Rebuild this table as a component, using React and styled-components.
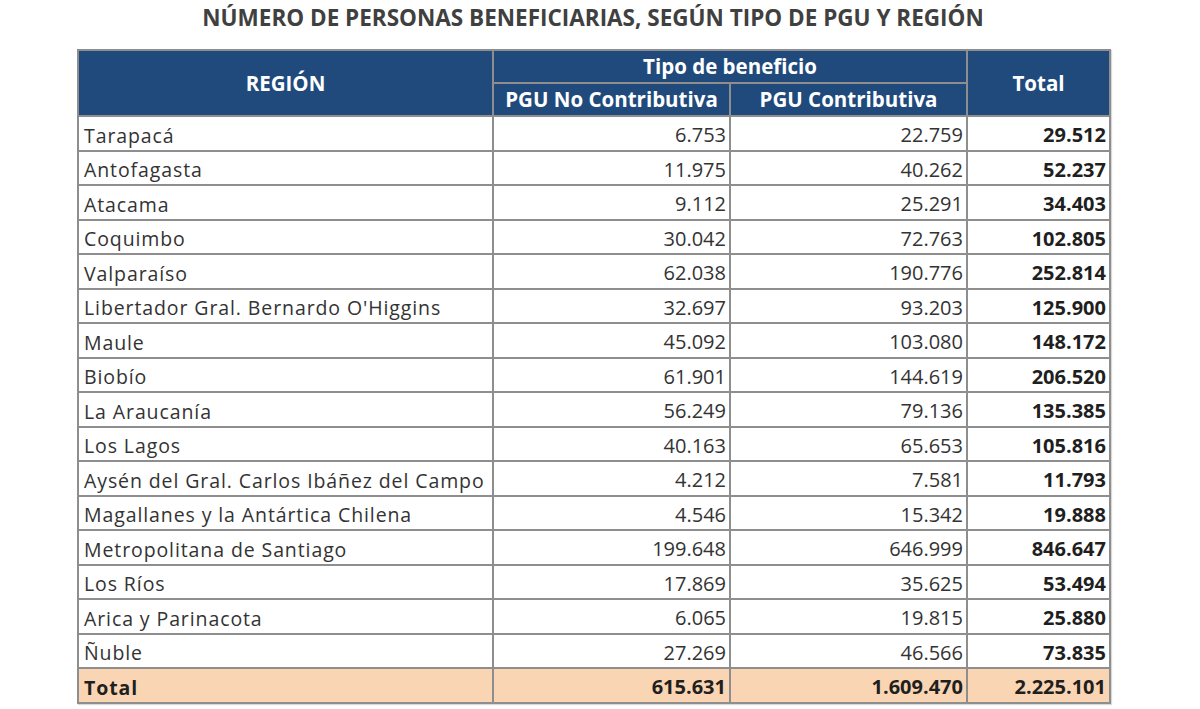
import styled, { createGlobalStyle } from "styled-components";

const GlobalStyle = createGlobalStyle`
  html, body {
    margin: 0;
    padding: 0;
    background: #ffffff;
  }
`;

const rows = [
  ["Tarapacá", "6.753", "22.759", "29.512"],
  ["Antofagasta", "11.975", "40.262", "52.237"],
  ["Atacama", "9.112", "25.291", "34.403"],
  ["Coquimbo", "30.042", "72.763", "102.805"],
  ["Valparaíso", "62.038", "190.776", "252.814"],
  ["Libertador Gral. Bernardo O'Higgins", "32.697", "93.203", "125.900"],
  ["Maule", "45.092", "103.080", "148.172"],
  ["Biobío", "61.901", "144.619", "206.520"],
  ["La Araucanía", "56.249", "79.136", "135.385"],
  ["Los Lagos", "40.163", "65.653", "105.816"],
  ["Aysén del Gral. Carlos Ibáñez del Campo", "4.212", "7.581", "11.793"],
  ["Magallanes y la Antártica Chilena", "4.546", "15.342", "19.888"],
  ["Metropolitana de Santiago", "199.648", "646.999", "846.647"],
  ["Los Ríos", "17.869", "35.625", "53.494"],
  ["Arica y Parinacota", "6.065", "19.815", "25.880"],
  ["Ñuble", "27.269", "46.566", "73.835"],
];

const Page = styled.div`
  width: 1200px;
  height: 709px;
  display: flex;
  flex-direction: column;
  align-items: flex-start;
  padding-left: 77px;
  box-sizing: border-box;
`;

const Title = styled.h1`
  margin: 3px 0 0 -77px;
  width: 1186px;
  text-align: center;
  font-family: "Open Sans", sans-serif;
  font-weight: 700;
  font-size: 22.5px;
  line-height: 30px;
  color: #404040;
`;

const Table = styled.table`
  margin-top: 16px;
  border-collapse: collapse;
  table-layout: fixed;
  width: 1032px;
  font-family: "Open Sans", sans-serif;
  color: #333333;
  box-shadow: 1px 1px 1px rgba(0, 0, 0, 0.15);
`;

const Head = styled.th`
  background: #214a7c;
  color: #ffffff;
  font-weight: 700;
  font-size: 20.5px;
  border: 2px solid #8e8e8e;
  padding: 0;
  height: 31px;
  text-align: center;
  vertical-align: middle;
  line-height: 1;
`;

const Cell = styled.td`
  border: 2px solid #8e8e8e;
  height: 28.5px;
  padding: 4px ${(p) => (p.$num ? "3px" : "0")} 0 ${(p) => (p.$num ? "0" : "5px")};
  text-align: ${(p) => (p.$num ? "right" : "left")};
  font-size: ${(p) => (p.$num ? "20px" : "19.5px")};
  letter-spacing: ${(p) => (p.$num ? "0" : "0.9px")};
  font-weight: ${(p) => (p.$bold ? 700 : 400)};
  color: ${(p) => (p.$bold ? "#1f1f1f" : "#333333")};
  background: ${(p) => (p.$total ? "#f9d5b4" : "#ffffff")};
  white-space: nowrap;
  line-height: 1;
  vertical-align: middle;
`;

export default function App() {
  return (
    <Page>
      <GlobalStyle />
      <Title>NÚMERO DE PERSONAS BENEFICIARIAS, SEGÚN TIPO DE PGU Y REGIÓN</Title>
      <Table>
        <colgroup>
          <col style={{ width: 415 }} />
          <col style={{ width: 237 }} />
          <col style={{ width: 237 }} />
          <col style={{ width: 143 }} />
        </colgroup>
        <thead>
          <tr>
            <Head rowSpan={2}>REGIÓN</Head>
            <Head colSpan={2}>Tipo de beneficio</Head>
            <Head rowSpan={2}>Total</Head>
          </tr>
          <tr>
            <Head>PGU No Contributiva</Head>
            <Head>PGU Contributiva</Head>
          </tr>
        </thead>
        <tbody>
          {rows.map((r) => (
            <tr key={r[0]}>
              <Cell>{r[0]}</Cell>
              <Cell $num>{r[1]}</Cell>
              <Cell $num>{r[2]}</Cell>
              <Cell $num $bold>{r[3]}</Cell>
            </tr>
          ))}
          <tr>
            <Cell $bold $total>Total</Cell>
            <Cell $num $bold $total>615.631</Cell>
            <Cell $num $bold $total>1.609.470</Cell>
            <Cell $num $bold $total>2.225.101</Cell>
          </tr>
        </tbody>
      </Table>
    </Page>
  );
}
